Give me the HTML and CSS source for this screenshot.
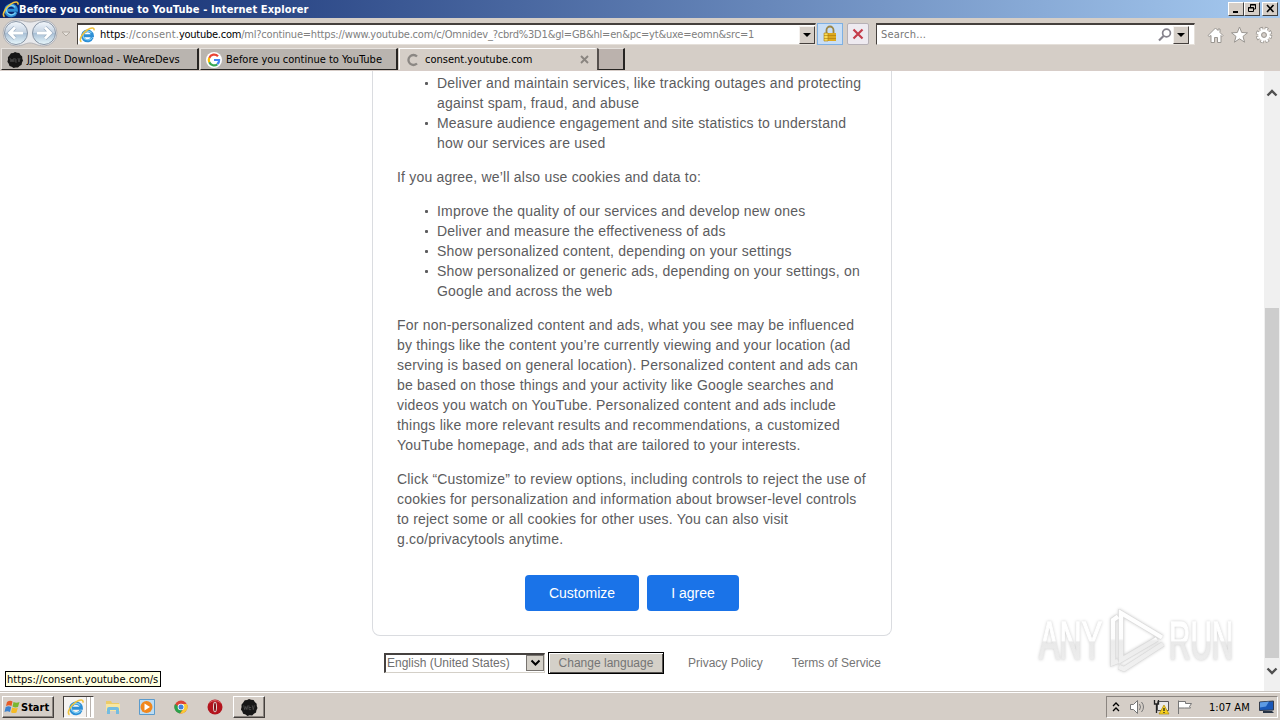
FILE: index.html
```html
<!DOCTYPE html>
<html lang="en">
<head>
    <meta charset="UTF-8">
    <title>Before you continue to YouTube</title>
    <link rel="stylesheet" href="styles.css">
</head>
<body>
    <!-- Shared icons -->
    <svg class="defs" width="0" height="0">
        <defs>
            <linearGradient id="orb" x1="0" y1="0" x2="0" y2="1">
                <stop offset="0" stop-color="#f4f8fc"/>
                <stop offset="0.48" stop-color="#c3d2e2"/>
                <stop offset="0.52" stop-color="#a9c0d6"/>
                <stop offset="1" stop-color="#e9f8fc"/>
            </linearGradient>
            <linearGradient id="mark" gradientUnits="userSpaceOnUse" x1="0" y1="0" x2="0" y2="64">
                <stop offset="0" stop-color="#ffffff"/>
                <stop offset="0.46" stop-color="#fdfdfd"/>
                <stop offset="0.5" stop-color="#ececec"/>
                <stop offset="1" stop-color="#f1f1f1"/>
            </linearGradient>
            <symbol id="ie" viewBox="0 0 16 16">
                <path d="M13.200 10.600A5 5 0 1 1 13.500 8.700H5" fill="none" stroke="#2d8fd6" stroke-width="2.900"/>
                <path d="M12.800 11A4.800 4.800 0 0 1 4.200 7.500 4.800 4.800 0 0 1 12.500 6" fill="none" stroke="#84d2f6" stroke-width="1.100"/>
                <path d="M2.400 14.800C-.6 13 3.300 6.200 8.200 3 12 .4 15.600 0 15 3.400" fill="none" stroke="#f0c23c" stroke-width="1.500"/>
            </symbol>
            <symbol id="devs" viewBox="0 0 16 16">
                <path d="M8 0l2 .8 2.300.2 1.200 1.900 1.700 1.500.1 2.300.7 1.800-1 2-.4 2.200-2 1.200-1.600 1.600-2.400-.1-2 .5-1.900-1.200-2.200-.8-.8-2.200-1.300-1.900.6-2.200-.1-2.300L2.600 3.200 4 1.200l2.300-.2z" fill="#161616"/>
                <path d="M3 6l1 4 1-3 1 3 1-4M8 6v4h2M8 8h2M11 6l1 4 1-4" fill="none" stroke="#555" stroke-width=".7"/>
            </symbol>
        </defs>
    </svg>

    <header class="titlebar">
        <svg class="title-icon" width="17" height="17"><use href="#ie"/></svg>
        <h1>Before you continue to YouTube - Internet Explorer</h1>
        <div class="window-buttons">
            <span class="win-btn"><svg width="13" height="11"><path d="M3 8h5v2H3z"/></svg></span>
            <span class="win-btn"><svg width="13" height="11" fill="none" stroke="#000"><path d="M4.500 4V1.500h5v4.500H8M4 2h6M2.500 4.500h5v4h-5zM2 5h6"/></svg></span>
            <span class="win-btn close"><svg width="13" height="11" fill="none" stroke="#000" stroke-width="1.600"><path d="M3 2l6.500 7M9.500 2L3 9"/></svg></span>
        </div>
    </header>

    <nav class="navbar">
        <svg class="history-nav" width="74" height="28">
            <path d="M15 1C22 1 24 3 29 3S36 1 43 1A13 13 0 0 1 43 27C36 27 34 24 29 24S22 27 15 27A13 13 0 0 1 15 1Z" fill="#e8e9ec" stroke="#b3b3b6"/>
            <circle cx="15" cy="14" r="11.500" fill="url(#orb)" stroke="#8996a6"/>
            <circle cx="43" cy="14" r="11.500" fill="url(#orb)" stroke="#8996a6"/>
            <path d="M22 14H9M14 8.500L8.500 14l5.500 5.500M36 14h13M44 8.500l5.500 5.500-5.500 5.500" fill="none" stroke="#9db0c4" stroke-width="4.200"/>
            <path d="M22 14H9M14 8.500L8.500 14l5.500 5.500M36 14h13M44 8.500l5.500 5.500-5.500 5.500" fill="none" stroke="#fff" stroke-width="2.800"/>
            <path d="M61 13h8l-4 4z" fill="#e8e4df" stroke="#b1aaa2"/>
        </svg>
        <div class="field address">
            <svg width="16" height="16"><use href="#ie"/></svg>
            <span class="url"><b class="scheme">https</b><span class="sub">://consent.</span><b class="domain">youtube.com</b><span class="path">/ml?continue=https://www.youtube.com/c/Omnidev_?cbrd%3D1&amp;gl=GB&amp;hl=en&amp;pc=yt&amp;uxe=eomn&amp;src=1</span></span>
            <span class="drop"><i></i></span>
        </div>
        <span class="tool lock">
            <svg width="16" height="18"><path d="M4.500 8V5a3.500 3.500 0 0 1 7 0v3" fill="none" stroke="#9b8645" stroke-width="1.800"/><path d="M2 8h12v8H2z" fill="#dda91e"/><path d="M2 8h4v8H2zM2 10.500h12M2 13.500h12" fill="#f9dc55" stroke="#a7790e" stroke-width=".6"/></svg>
        </span>
        <span class="tool stop">
            <svg width="12" height="12"><path d="M1.500 1.500l9 9M10.500 1.500l-9 9" stroke="#c43c4a" stroke-width="2.200"/></svg>
        </span>
        <div class="field search">
            <span class="placeholder">Search...</span>
            <svg width="14" height="14" fill="none" stroke="#85828c" stroke-width="1.700"><circle cx="8.500" cy="5" r="3.900"/><path d="M5.500 8L1 12.500" stroke-width="2.200"/></svg>
            <span class="drop"><i></i></span>
        </div>
        <svg class="commands" width="66" height="20" fill="#fff" stroke="#9a9691" stroke-width="1">
            <path d="M1 10.500L8.500 3l2.500 2.500V4h2v3.500l3 3-1 1-1-1v7h-3.500v-5h-3v5H4v-7l-1.800 1z"/>
            <path d="M32.500 2l2.200 5.500 5.800.3-4.500 3.600 1.600 5.800-5.100-3.400-5.100 3.400 1.600-5.800-4.500-3.600 5.800-.3z"/>
            <!-- gear: dark teeth, white teeth over them, then the ring -->
            <circle cx="57" cy="10" r="6.300" fill="none" stroke-width="4" stroke-dasharray="3.200 1.750"/>
            <circle cx="57" cy="10" r="6.300" fill="none" stroke="#fff" stroke-width="2.400" stroke-dasharray="2 2.950" stroke-dashoffset="-.6"/>
            <circle cx="57" cy="10" r="4.300" fill="none" stroke="#fff" stroke-width="3"/>
            <circle cx="57" cy="10" r="2.400" fill="#d6cfc9"/>
        </svg>
    </nav>

    <div class="tabs">
        <div class="tab"><svg width="16" height="16"><use href="#devs"/></svg><span class="label-devs">JJSploit Download - WeAreDevs</span></div>
        <div class="tab">
            <svg width="16" height="16" viewBox="0 0 16 16"><circle cx="8" cy="8" r="8" fill="#fff"/><g fill="none" stroke-width="2.200"><path d="M12 4.300A5.200 5.200 0 0 0 3.300 5.800" stroke="#ea4335"/><path d="M3.300 5.800a5.200 5.200 0 0 0 0 4.500" stroke="#fbbc05"/><path d="M3.300 10.300a5.200 5.200 0 0 0 8 2" stroke="#34a853"/><path d="M11.300 12.200A5 5 0 0 0 13.100 8H8" stroke="#4285f4"/></g></svg>
            <span class="label-google">Before you continue to YouTube</span>
        </div>
        <div class="tab active">
            <svg width="16" height="16"><path d="M12 4.500a5 5 0 1 0 0 7" fill="none" stroke="#8b8783" stroke-width="2.300"/></svg>
            <span class="label-consent">consent.youtube.com</span>
            <svg class="tab-close" width="9" height="9"><path d="M1 1l7 7M8 1L1 8" stroke="#8a8580" stroke-width="1.900"/></svg>
        </div>
        <div class="tab new-tab"></div>
    </div>

    <main class="viewport">
        <div class="page">
            <section class="card">
                <ul>
                    <li>Deliver and maintain services, like tracking outages and protecting<br>against spam, fraud, and abuse</li>
                    <li>Measure audience engagement and site statistics to understand<br>how our services are used</li>
                </ul>
                <p>If you agree, we’ll also use cookies and data to:</p>
                <ul>
                    <li>Improve the quality of our services and develop new ones</li>
                    <li>Deliver and measure the effectiveness of ads</li>
                    <li>Show personalized content, depending on your settings</li>
                    <li>Show personalized or generic ads, depending on your settings, on<br>Google and across the web</li>
                </ul>
                <p>For non-personalized content and ads, what you see may be influenced<br>by things like the content you’re currently viewing and your location (ad<br>serving is based on general location). Personalized content and ads can<br>be based on those things and your activity like Google searches and<br>videos you watch on YouTube. Personalized content and ads include<br>things like more relevant results and recommendations, a customized<br>YouTube homepage, and ads that are tailored to your interests.</p>
                <p>Click “Customize” to review options, including controls to reject the use of<br>cookies for personalization and information about browser-level controls<br>to reject some or all cookies for other uses. You can also visit<br>g.co/privacytools anytime.</p>
                <div class="actions">
                    <button class="customize">Customize</button>
                    <button class="agree">I agree</button>
                </div>
            </section>
            <footer class="page-footer">
                <div class="language">
                    <span>English (United States)</span>
                    <span class="select-arrow"><svg width="11" height="8"><path d="M1.500 1.500l4 4 4-4" fill="none" stroke="#000" stroke-width="2"/></svg></span>
                </div>
                <button class="change">Change language</button>
                <a class="privacy">Privacy Policy</a>
                <a class="terms">Terms of Service</a>
            </footer>
        </div>
        <div class="scrollbar">
            <svg class="up" width="12" height="8"><path d="M1.500 6.500L6 2l4.500 4.500" fill="none" stroke="#505050" stroke-width="2.400"/></svg>
            <div class="thumb"></div>
            <svg class="down" width="12" height="8"><path d="M1.500 1.500L6 6l4.500-4.500" fill="none" stroke="#505050" stroke-width="2.400"/></svg>
        </div>
        <div class="status">https://consent.youtube.com/s</div>
        <div class="watermark">
            <div class="word"><span>ANY</span></div>
            <svg width="58" height="64" fill="none">
                <g stroke="#dcdcdc" stroke-width="5.500">
                    <path d="M8 7.500L3 11v43l5-2"/>
                    <path d="M47 30L11 51V4l41 24.500"/>
                    <path d="M9 58l5 2 39-25"/>
                </g>
                <g stroke="url(#mark)" stroke-width="4.300">
                    <path d="M8 7.500L3 11v43l5-2"/>
                    <path d="M47 30L11 51V4l41 24.500"/>
                    <path d="M9 58l5 2 39-25"/>
                </g>
            </svg>
            <div class="word run"><span>RUN</span></div>
        </div>
    </main>

    <div class="taskbar">
        <div class="start">
            <svg width="17" height="16"><path d="M3 3q3-2 5.500-.5L7.500 7Q5 5.500 2 7z" fill="#e65b26"/><path d="M9.500 3q3 1.500 6 0l-1.500 5q-3 1-5.500-.5z" fill="#79b72f"/><path d="M1.700 8q3-1.500 5.500 0L6 13Q3.500 11.500.5 13z" fill="#3b82cf"/><path d="M8.200 8.500q3 1.500 5.600.3L12.500 13.500q-3 1.300-5.500-.3z" fill="#f5bb25"/></svg>
            <span>Start</span>
        </div>
        <div class="task ie-task"><svg width="17" height="17"><use href="#ie"/></svg></div>
        <svg class="launch" width="18" height="18"><path d="M2 3h5l1 2h7v8H2z" fill="#eccb68"/><path d="M2 6h14v7H2z" fill="#f8e6a0"/><path d="M3 16v-5q0-2 2-2h8q2 0 2 2v5h-3v-4H6v4z" fill="#74bce0"/></svg>
        <svg class="launch" width="18" height="18"><path d="M1.500 1.500h15v15h-15z" fill="#bcdcf3" stroke="#5b9bcc"/><circle cx="8.500" cy="9" r="6" fill="#f1871c"/><path d="M6.500 5.500l5.500 3.500-5.500 3.500z" fill="#fff"/></svg>
        <svg class="launch" width="18" height="18"><circle cx="9" cy="9" r="6.500" fill="#dd4436"/><path d="M3 6A6.500 6.500 0 0 0 8 15.400L11 11 7 9z" fill="#2ba24c"/><path d="M9 6h5.800A6.500 6.500 0 0 1 8 15.400l3.500-4.500z" fill="#f9ca34"/><circle cx="9" cy="9" r="3.300" fill="#fff"/><circle cx="9" cy="9" r="2.500" fill="#4380db"/></svg>
        <svg class="launch" width="18" height="18"><circle cx="9" cy="9" r="7.500" fill="#b3141d"/><ellipse cx="9" cy="9" rx="2" ry="5.300" fill="#e6dcd8"/><ellipse cx="9" cy="9" rx="1" ry="4.500" fill="#7a1015"/><path d="M3 5q6-5 12 0" fill="none" stroke="#dd6265"/></svg>
        <div class="task devs-task"><svg width="18" height="17"><use href="#devs"/></svg></div>
        <div class="tray">
            <svg width="8" height="12" fill="none" stroke="#000" stroke-width="1.300"><path d="M1 5l3-3 3 3M1 10l3-3 3 3"/></svg>
            <svg class="sound" width="18" height="16" fill="#fff" stroke="#777"><path d="M1.500 5.500h3l4-4v13l-4-4h-3z"/><path d="M10.500 5q2 3 0 6M12.500 3q4 5 0 10" fill="none"/></svg>
            <svg class="network" width="17" height="16"><path d="M4.500 2.500h11v9h-11z" fill="#e9e9e7" stroke="#555"/><path d="M1.500 1v4h4V1M3.500 5v9" fill="none" stroke="#222" stroke-width="1.300"/><path d="M11 6l5 9H6z" fill="#f6d01d" stroke="#ad8a08" stroke-width=".7"/><path d="M11 9v3M11 13v1" stroke="#222" stroke-width="1.300"/></svg>
            <svg class="flag" width="18" height="16" fill="#fff" stroke="#777"><path d="M2.500 15V1.500M2.500 2.500h7v2h6l-2 3 1 1.500H8.500V9h-6z"/></svg>
            <time>1:07 AM</time>
            <svg class="monitor" width="16" height="14"><path d="M.5 2l14-1v9l-14 .5z" fill="#1a58b8" stroke="#343c4b"/><path d="M1 2.500l9-1-3 5-6 1z" fill="#5d9ae3"/><path d="M4 11h9l2 2H4z" fill="#273344"/></svg>
        </div>
    </div>
</body>
</html>
```

FILE: styles.css
```css
:root {
    --face: #d5cec7;
    --blue: #1a73e8;
    --ui-font: "DejaVu Sans Condensed", "DejaVu Sans", sans-serif;
}

* {
    box-sizing: border-box;
}

body {
    margin: 0;
    width: 1280px;
    height: 720px;
    overflow: hidden;
    display: flex;
    flex-direction: column;
    background: var(--face);
    color: #000;
    font-family: var(--ui-font);
    font-size: 11px;
    white-space: nowrap;
}

svg {
    flex: none;
    display: block;
}

.defs {
    position: absolute;
}

button {
    margin: 0;
    padding: 0;
    border: 0;
    font-family: "Liberation Sans", Arial, sans-serif;
}

/* Title bar */
.titlebar {
    height: 18px;
    flex: none;
    display: flex;
    align-items: center;
    padding: 0 2px;
    background: linear-gradient(to right, #0a246a, #a6caf0);
}

h1 {
    margin: 0;
    color: #fff;
    font-size: 11px;
    font-weight: bold;
    letter-spacing: 0.1px;
}

.window-buttons {
    display: flex;
    margin-left: auto;
}

.win-btn {
    width: 16px;
    height: 14px;
    padding-left: 1px;
    background: var(--face);
    border: 1px solid;
    border-color: #fff #404040 #404040 #fff;
}

.win-btn.close {
    margin-left: 2px;
}

/* Navigation bar */
.navbar {
    height: 30px;
    flex: none;
    display: flex;
    align-items: flex-start;
    padding: 1px 0 0 1px;
}

.history-nav {
    margin-right: 2px;
}

.field {
    height: 22px;
    margin-top: 4px;
    display: flex;
    align-items: center;
    background: #fff;
    border: 1px solid;
    border-color: #45403d #e5e0da #e5e0da #45403d;
    border-top-width: 2px;
}

.address {
    width: 739px;
    padding-left: 1px;
}

.url {
    margin-left: 5px;
    color: #808080;
    display: flex;
}

.url b {
    color: #000;
    font-weight: normal;
}

.url .sub {
    letter-spacing: 0.1px;
}

.url .domain {
    letter-spacing: -0.25px;
}

.url .path {
    letter-spacing: -0.2px;
}

.drop {
    width: 16px;
    height: 18px;
    margin-left: auto;
    display: flex;
    align-items: center;
    justify-content: center;
    background: var(--face);
    border: 1px solid;
    border-color: #f5f2ef #45403d #45403d #f5f2ef;
}

.drop i {
    border: 4px solid transparent;
    border-top-color: #000;
    border-bottom: 0;
}

.tool {
    height: 22px;
    margin-top: 4px;
    display: flex;
    align-items: center;
    justify-content: center;
}

.lock {
    width: 26px;
    margin-left: 1px;
    background: #c9def5;
    border: 1px solid #7eb0e3;
}

.stop {
    width: 22px;
    margin-left: 4px;
    background: #eeeaf0;
    border: 1px solid #b6b0b5;
    border-radius: 2px;
}

.search {
    width: 319px;
    margin-left: 7px;
    padding: 0 5px 0 4px;
}

.placeholder {
    color: #777;
    letter-spacing: 0.2px;
}

.search svg {
    margin-left: auto;
}

.search .drop {
    margin-left: 1px;
}

.commands {
    margin: 6px 0 0 12px;
}

/* Tabs */
.tabs {
    height: 23px;
    flex: none;
    display: flex;
    padding-left: 1px;
    border-bottom: 1px solid #d7cdc8;
}

.tab {
    width: 198px;
    height: 22px;
    display: flex;
    align-items: center;
    gap: 4px;
    padding: 1px 0 0 5px;
    background: #b9b4af;
    border: 1px solid;
    border-color: #e6e2de #262422 #262422 #e6e2de;
    border-right-width: 2px;
    margin-right: 1px;
}

.tab.active {
    background: var(--face);
    border-color: #fff transparent transparent #fff;
}

.tab-close {
    margin: 0 6px 0 auto;
}

.tab.new-tab {
    width: 28px;
    margin-left: -1px;
    background: #bbb2ad;
    border-left: 2px solid #55504d;
}

/* Web page */
.viewport {
    height: 620px;
    flex: none;
    display: flex;
    position: relative;
    background: #fff;
    font-family: "Liberation Sans", Arial, sans-serif;
}

.page {
    width: 1264px;
    display: flex;
    flex-direction: column;
    align-items: center;
}

.card {
    width: 520px;
    height: 565px;
    padding: 2px 24px 24px;
    border: 1px solid #dadce0;
    border-top: 0;
    border-radius: 0 0 8px 8px;
    color: #5c5c5e;
    font-size: 14px;
    line-height: 20px;
    letter-spacing: 0.2px;
}

.card ul {
    margin: 0 0 14px;
    padding-left: 40px;
    list-style: none;
}

.card li {
    position: relative;
}

.card li::before {
    content: "";
    position: absolute;
    left: -12px;
    top: 9px;
    width: 3px;
    height: 3px;
    border-radius: 1px;
    background: #5c5c5e;
}

.card p {
    margin: 0 0 14px;
}

.actions {
    display: flex;
    justify-content: center;
    gap: 8px;
    margin-top: 26px;
}

.actions button {
    height: 36px;
    border-radius: 4px;
    background: var(--blue);
    color: #fff;
    font-size: 14px;
}

.customize {
    width: 114px;
}

.agree {
    width: 92px;
}

.page-footer {
    width: 520px;
    padding: 16px 0 0 12px;
    display: flex;
    align-items: center;
    color: #757575;
    font-size: 12px;
}

.language {
    width: 161px;
    height: 20px;
    padding: 0 0 1px 1px;
    display: flex;
    align-items: center;
    border: 1px solid;
    border-color: #45413f #d4d0c8 #d4d0c8 #45413f;
    border-top-width: 2px;
    border-left-width: 2px;
    color: #6f6f6f;
}

.select-arrow {
    width: 18px;
    height: 16px;
    margin: 0 0 0 auto;
    display: flex;
    align-items: center;
    justify-content: center;
    background: #d4d0c8;
    border: 1px solid #77736f;
}

.change {
    width: 116px;
    height: 22px;
    margin-left: 3px;
    background: #d4d0c8;
    border: 1px solid #000;
    box-shadow: inset 1px 1px #fff, inset -1px -1px #55524f;
    color: #757575;
    font-size: 12px;
}

.privacy {
    margin-left: 24px;
}

.terms {
    margin-left: 29px;
}

.scrollbar {
    width: 16px;
    background: #f0f0f0;
    display: flex;
    flex-direction: column;
    align-items: center;
}

.up {
    margin-top: 18px;
}

.thumb {
    width: 14px;
    height: 350px;
    margin-top: 211px;
    background: #cdcdcd;
}

.down {
    margin-top: 9px;
}

.status {
    position: absolute;
    left: 5px;
    bottom: 4px;
    width: 156px;
    height: 16px;
    padding-left: 1px;
    border: 1px solid #000;
    background: #ffffe1;
    font-family: var(--ui-font);
    line-height: 15px;
}

.watermark {
    position: absolute;
    left: 1039px;
    top: 538px;
    height: 64px;
    display: flex;
    align-items: center;
    filter: drop-shadow(0 0 1.5px #ccc);
}

.word {
    width: 62px;
    display: flex;
    font-size: 53px;
    line-height: 60px;
}

.word span {
    flex: none;
    transform: scaleX(0.58);
    transform-origin: left;
    background: linear-gradient(#fff 49%, #e9e9e9 52%, #efefef);
    -webkit-background-clip: text;
    background-clip: text;
    color: transparent;
    -webkit-text-stroke: 1.5px transparent;
}

.word.run span {
    transform: scaleX(0.56);
}

.watermark svg {
    margin: 0 1px 0 9px;
}

/* Taskbar */
.taskbar {
    height: 29px;
    flex: none;
    display: flex;
    padding: 4px 2px 3px;
    background: var(--face);
    border-top: 1px solid #c9c4bf;
    box-shadow: inset 0 1px #fff;
}

.start,
.task {
    height: 22px;
    display: flex;
    align-items: center;
    justify-content: center;
    border: 1px solid;
    border-color: #fff #45403d #45403d #fff;
    box-shadow: inset -1px -1px #8b8580;
}

.start {
    width: 52px;
    justify-content: flex-start;
    padding-left: 1px;
    font-weight: bold;
    font-size: 11px;
}

.ie-task {
    width: 31px;
    margin-left: 9px;
    padding-right: 6px;
    border-color: #45403d #fff #fff #45403d;
    background: linear-gradient(to right, #f5f3f1 22px, #b8b2ad 22px 23px, #fff 23px 26px, #b8b2ad 26px 27px, #fff 27px);
    box-shadow: none;
}

.launch {
    margin: 2px 0 0 16px;
}

.ie-task + .launch {
    margin-left: 10px;
}

.devs-task {
    width: 32px;
    margin-left: 9px;
}

.tray {
    width: 172px;
    height: 22px;
    margin-left: auto;
    display: flex;
    align-items: center;
    padding-left: 5px;
    border: 1px solid;
    border-color: #8b8580 #fff #fff #8b8580;
}

.sound {
    margin-left: 9px;
}

.network {
    margin-left: 6px;
}

.flag {
    margin-left: 6px;
}

.tray time {
    width: 40px;
    margin-left: 15px;
}

.monitor {
    margin-left: 10px;
}
```
